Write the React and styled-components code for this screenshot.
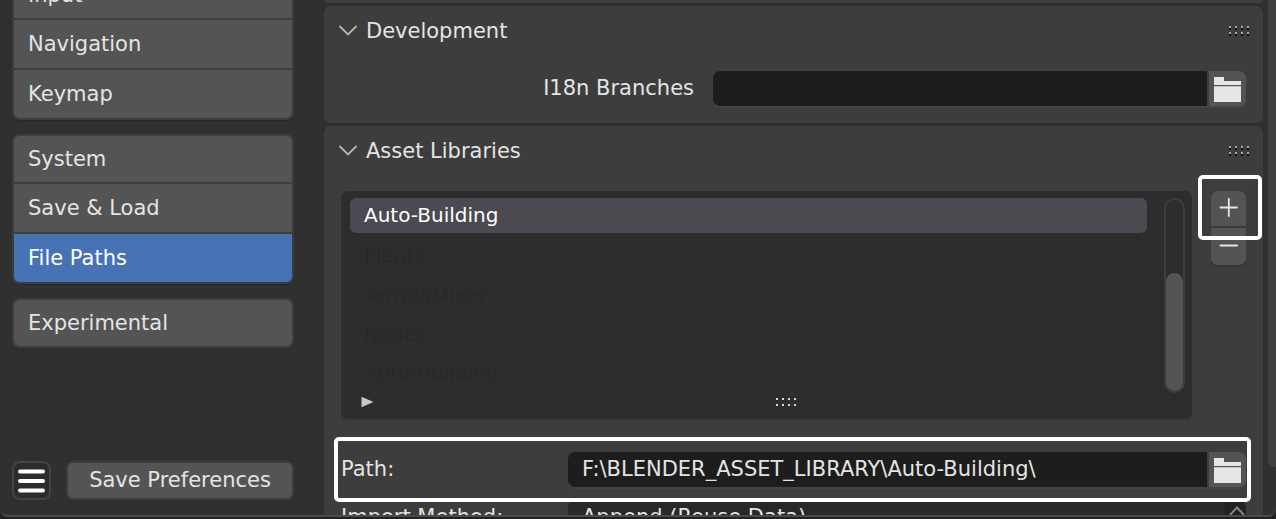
import React, { useState } from "react";
import styled, { createGlobalStyle, css } from "styled-components";

const GlobalStyle = createGlobalStyle`
  *, *::before, *::after { box-sizing: border-box; }
  body {
    margin: 0;
    background: #222222;
    color: #e4e4e4;
    font-family: "DejaVu Sans", "Liberation Sans", sans-serif;
    font-size: 21px;
    line-height: 24px;
  }
  button, input, select { font: inherit; color: inherit; margin: 0; border: 0; padding: 0; }
  button { cursor: pointer; }
`;

const Screen = styled.div`
  height: 100vh;
  padding-bottom: 2px;
`;

const Window = styled.div`
  display: flex;
  height: 100%;
  overflow: hidden;
  background: #303030;
  border-bottom: 2px solid #4a4a4a;
  border-radius: 0 0 8px 8px;
`;

const Sidebar = styled.aside`
  display: flex;
  flex-direction: column;
  justify-content: space-between;
  flex: none;
  width: 324px;
  padding: 0 30px 15px 12px;
`;

const Nav = styled.nav`
  display: flex;
  flex-direction: column;
  gap: 14px;
  margin-top: -30px;
`;

const NavGroup = styled.div`
  display: flex;
  flex-direction: column;
  gap: 2px;
  border: 2px solid #3d3d3d;
  border-radius: 7px;
  background: #3d3d3d;
  overflow: hidden;
  box-shadow: 0 1px 1px #2a2a2a;
`;

const NavItem = styled.button`
  height: 48px;
  padding: 0 14px;
  text-align: left;
  background: ${(p) => (p.$active ? "#4772b3" : "#545454")};
  color: ${(p) => (p.$active ? "#ffffff" : "#e4e4e4")};
  &:first-child { height: 46px; border-radius: 5px 5px 0 0; }
  &:last-child { border-bottom-left-radius: 5px; border-bottom-right-radius: 5px; }
`;

const SidebarFooter = styled.div`
  display: flex;
  gap: 15px;
  height: 39px;
`;

const MenuButton = styled.button`
  display: flex;
  align-items: center;
  justify-content: center;
  flex: none;
  width: 39px;
  background: #2c2c2c;
  border: 2px solid #444444;
  border-radius: 8px;
`;

const SaveButton = styled.button`
  flex: 1;
  padding-bottom: 2px;
  background: #545454;
  border: 2px solid #3d3d3d;
  border-radius: 7px;
`;

const Main = styled.main`
  flex: 1;
  min-width: 0;
  display: flex;
  flex-direction: column;
  gap: 3px;
`;

const Panel = styled.section`
  flex: none;
  padding: 13px 17px 17px;
  background: #3d3d3d;
  border-radius: 7px;
`;

const PreviousPanel = styled.div`
  flex: none;
  height: 3px;
  background: #3d3d3d;
  border-radius: 0 0 7px 7px;
`;

const PanelHeader = styled.header`
  display: flex;
  align-items: center;
  justify-content: space-between;
  height: 24px;
  padding-right: 13px;
  margin: 0 -17px 28px 0;
`;

const PanelTitle = styled.button`
  display: flex;
  align-items: center;
  gap: 8px;
  background: none;
  margin-left: -3px;
`;

const Heading = styled.h2`
  margin: 0;
  font-size: 21px;
  font-weight: 400;
`;

const Property = styled.div`
  display: grid;
  grid-template-columns: ${(p) => p.$label}px minmax(0, 1fr);
  column-gap: ${(p) => p.$gap || 0}px;
  align-items: center;
`;

const Label = styled.label`
  padding-bottom: 2px;
  text-align: ${(p) => (p.$right ? "right" : "left")};
`;

const PathControl = styled.div`
  display: flex;
  gap: 2px;
  height: 35px;
  border-radius: 7px;
  box-shadow: 0 2px 0 #444444;
`;

const TextInput = styled.input`
  flex: 1;
  min-width: 0;
  padding: 0 14px 2px;
  background: #1d1d1d;
  border-radius: 7px 0 0 7px;
  outline: none;
`;

const FolderButton = styled.button`
  display: flex;
  align-items: center;
  justify-content: center;
  width: 37px;
  background: #545454;
  border-radius: 0 7px 7px 0;
`;

const SelectControl = styled.div`
  display: flex;
  height: 35px;
  overflow: hidden;
  background: #282828;
  border-radius: 7px;
`;

const Select = styled.select`
  appearance: none;
  flex: 1;
  min-width: 0;
  padding: 0 14px 2px;
  background: transparent;
  outline: none;
`;

const SelectArrow = styled.span`
  display: flex;
  justify-content: flex-end;
  width: 21px;
  padding: 6px 1px 0 0;
  background: #222222;
`;

const highlight = css`
  content: "";
  position: absolute;
  border: 4px solid #ffffff;
  border-radius: 5px;
  pointer-events: none;
`;

const HighlightedProperty = styled(Property)`
  position: relative;
  margin-bottom: 13px;
  &::after { ${highlight} inset: -15px -5px -15px -7px; }
`;

const LibraryArea = styled.div`
  display: flex;
  align-items: flex-start;
  gap: 19px;
  margin-bottom: 33px;
`;

const ListBox = styled.div`
  flex: 1;
  min-width: 0;
  display: flex;
  gap: 17px;
  height: 228px;
  padding: 7px 7px 7px 9px;
  background: #2d2d2d;
  border-radius: 7px;
  box-shadow: 0 2px 0 #383838;
`;

const ListColumn = styled.div`
  flex: 1;
  min-width: 0;
  display: flex;
  flex-direction: column;
`;

const List = styled.ul`
  margin: 0;
  padding: 0;
  list-style: none;
  font-size: 20px;
`;

const ListRow = styled.li`
  display: flex;
  align-items: center;
  height: ${(p) => (p.$selected ? 35 : 39)}px;
  padding: 0 14px 2px;
  margin-bottom: ${(p) => (p.$selected ? 4 : 0)}px;
  border-radius: 6px;
  background: ${(p) => (p.$selected ? "#4a4a50" : "transparent")};
  color: ${(p) => (p.$selected ? "#ffffff" : "#292929")};
`;

const ListFooter = styled.div`
  display: grid;
  grid-template-columns: 1fr auto 1fr;
  align-items: center;
  height: 12px;
  padding-left: 11px;
  margin: 3px -64px 0 0;
`;

const ExpandButton = styled.button`
  display: flex;
  justify-self: start;
  background: none;
`;

const ScrollTrack = styled.div`
  display: flex;
  flex-direction: column;
  justify-content: flex-end;
  width: 21px;
  height: 195px;
  border: 2px solid #3d3d3d;
  border-radius: 11px;
`;

const ScrollThumb = styled.div`
  height: 118px;
  background: #545454;
  border-radius: 9px;
`;

const ListActions = styled.div`
  position: relative;
  display: flex;
  flex-direction: column;
  gap: 2px;
  width: 35px;
  border-radius: 7px;
  background: #3a3a3a;
  box-shadow: 0 2px 1px #343434;
  &::after { ${highlight} top: -16px; left: -13px; right: -16px; height: 65px; }
`;

const ActionButton = styled.button`
  display: flex;
  align-items: center;
  justify-content: center;
  height: ${(p) => (p.$top ? 35 : 37)}px;
  padding-bottom: 2px;
  background: #545454;
  border-radius: ${(p) => (p.$top ? "7px 7px 0 0" : "0 0 7px 7px")};
`;

const PageScroll = styled.div`
  flex: none;
  width: 8px;
  margin-left: 5px;
  margin-bottom: 48px;
  background: #404040;
  border-radius: 0 0 0 7px;
`;

const Chevron = () => (
  <svg width="20" height="12" viewBox="0 0 20 12" fill="none" aria-hidden="true">
    <path d="M2 1.5 10 9.500 18 1.500" stroke="#b4b4b4" strokeWidth="1.8" strokeLinecap="round" />
  </svg>
);

const Grip = ({ shadow }) => (
  <svg width="22" height={shadow ? 10 : 8} viewBox={`0 0 22 ${shadow ? 10 : 8}`} shapeRendering="crispEdges" aria-hidden="true">
    {[0, 6].map((y) =>
      [0, 6, 12, 18].map((x) => (
        <g key={`${x}-${y}`}>
          <rect x={x + 1} y={y} width="2" height="2" fill={shadow ? "#a6a6a6" : "#d8d8d8"} />
          {shadow && <rect x={x + 1} y={y + 2} width="2" height="2" fill="#080808" />}
        </g>
      ))
    )}
  </svg>
);

const FolderIcon = () => (
  <svg width="27" height="26" viewBox="0 0 27 26" fill="#e6e6e6" aria-hidden="true">
    <path d="M0 1h10v4h17v4H0zM0 10.200h27V26H0z" />
  </svg>
);

const NAV = [
  ["Input", "Navigation", "Keymap"],
  ["System", "Save & Load", "File Paths"],
  ["Experimental"],
];

const LIBRARIES = ["Auto-Building", "Plants", "TerrainMixer", "Nodes", "Auto-Building"];

export default function App() {
  const [section, setSection] = useState("File Paths");
  const [branches, setBranches] = useState("");
  const [path, setPath] = useState("F:\\BLENDER_ASSET_LIBRARY\\Auto-Building\\");

  return (
    <>
      <GlobalStyle />
      <Screen>
        <Window>
          <Sidebar>
            <Nav aria-label="Preferences">
              {NAV.map((group) => (
                <NavGroup key={group[0]}>
                  {group.map((name) => (
                    <NavItem key={name} $active={name === section} onClick={() => setSection(name)}>
                      {name}
                    </NavItem>
                  ))}
                </NavGroup>
              ))}
            </Nav>
            <SidebarFooter>
              <MenuButton aria-label="Menu">
                <svg width="27" height="24" viewBox="0 0 27 24" aria-hidden="true">
                  <path d="M2 2.500H25M2 12H25M2 21.500H25" stroke="#ffffff" strokeWidth="4" strokeLinecap="round" />
                </svg>
              </MenuButton>
              <SaveButton>Save Preferences</SaveButton>
            </SidebarFooter>
          </Sidebar>

          <Main>
            <PreviousPanel />
            <Panel>
              <PanelHeader>
                <PanelTitle>
                  <Chevron />
                  <Heading>Development</Heading>
                </PanelTitle>
                <Grip shadow />
              </PanelHeader>
              <Property $label={353} $gap={19}>
                <Label htmlFor="branches" $right>I18n Branches</Label>
                <PathControl>
                  <TextInput id="branches" value={branches} onChange={(e) => setBranches(e.target.value)} />
                  <FolderButton aria-label="Browse branches folder"><FolderIcon /></FolderButton>
                </PathControl>
              </Property>
            </Panel>

            <Panel>
              <PanelHeader>
                <PanelTitle>
                  <Chevron />
                  <Heading>Asset Libraries</Heading>
                </PanelTitle>
                <Grip shadow />
              </PanelHeader>
              <LibraryArea>
                <ListBox>
                  <ListColumn>
                    <List>
                      {LIBRARIES.map((name, i) => (
                        <ListRow key={i} $selected={i === 0}>{name}</ListRow>
                      ))}
                    </List>
                    <ListFooter>
                      <ExpandButton aria-label="Show filter options">
                        <svg width="13" height="12" viewBox="0 0 13 12" aria-hidden="true">
                          <path d="M.5 .8 12.500 6 .5 11.200z" fill="#c8c8c8" />
                        </svg>
                      </ExpandButton>
                      <Grip />
                    </ListFooter>
                  </ListColumn>
                  <ScrollTrack><ScrollThumb /></ScrollTrack>
                </ListBox>
                <ListActions>
                  <ActionButton $top aria-label="Add library">
                    <svg width="19" height="19" viewBox="0 0 19 19" aria-hidden="true">
                      <path d="M1.500 9.500H18M9.800 1V18" stroke="#e6e6e6" strokeWidth="1.800" strokeLinecap="round" />
                    </svg>
                  </ActionButton>
                  <ActionButton aria-label="Remove library">
                    <svg width="19" height="19" viewBox="0 0 19 19" aria-hidden="true">
                      <path d="M1.500 9.500H18" stroke="#e6e6e6" strokeWidth="2" strokeLinecap="round" />
                    </svg>
                  </ActionButton>
                </ListActions>
              </LibraryArea>
              <HighlightedProperty $label={227}>
                <Label htmlFor="path">Path:</Label>
                <PathControl>
                  <TextInput id="path" value={path} onChange={(e) => setPath(e.target.value)} />
                  <FolderButton aria-label="Browse library folder"><FolderIcon /></FolderButton>
                </PathControl>
              </HighlightedProperty>
              <Property $label={227}>
                <Label htmlFor="method">Import Method:</Label>
                <SelectControl>
                  <Select id="method" defaultValue="append">
                    <option value="append">Append (Reuse Data)</option>
                  </Select>
                  <SelectArrow>
                    <svg width="16" height="10" viewBox="0 0 16 10" fill="none" aria-hidden="true">
                      <path d="M1 9 8 1.500 15 9" stroke="#858585" strokeWidth="2" />
                    </svg>
                  </SelectArrow>
                </SelectControl>
              </Property>
            </Panel>
          </Main>
          <PageScroll />
        </Window>
      </Screen>
    </>
  );
}
